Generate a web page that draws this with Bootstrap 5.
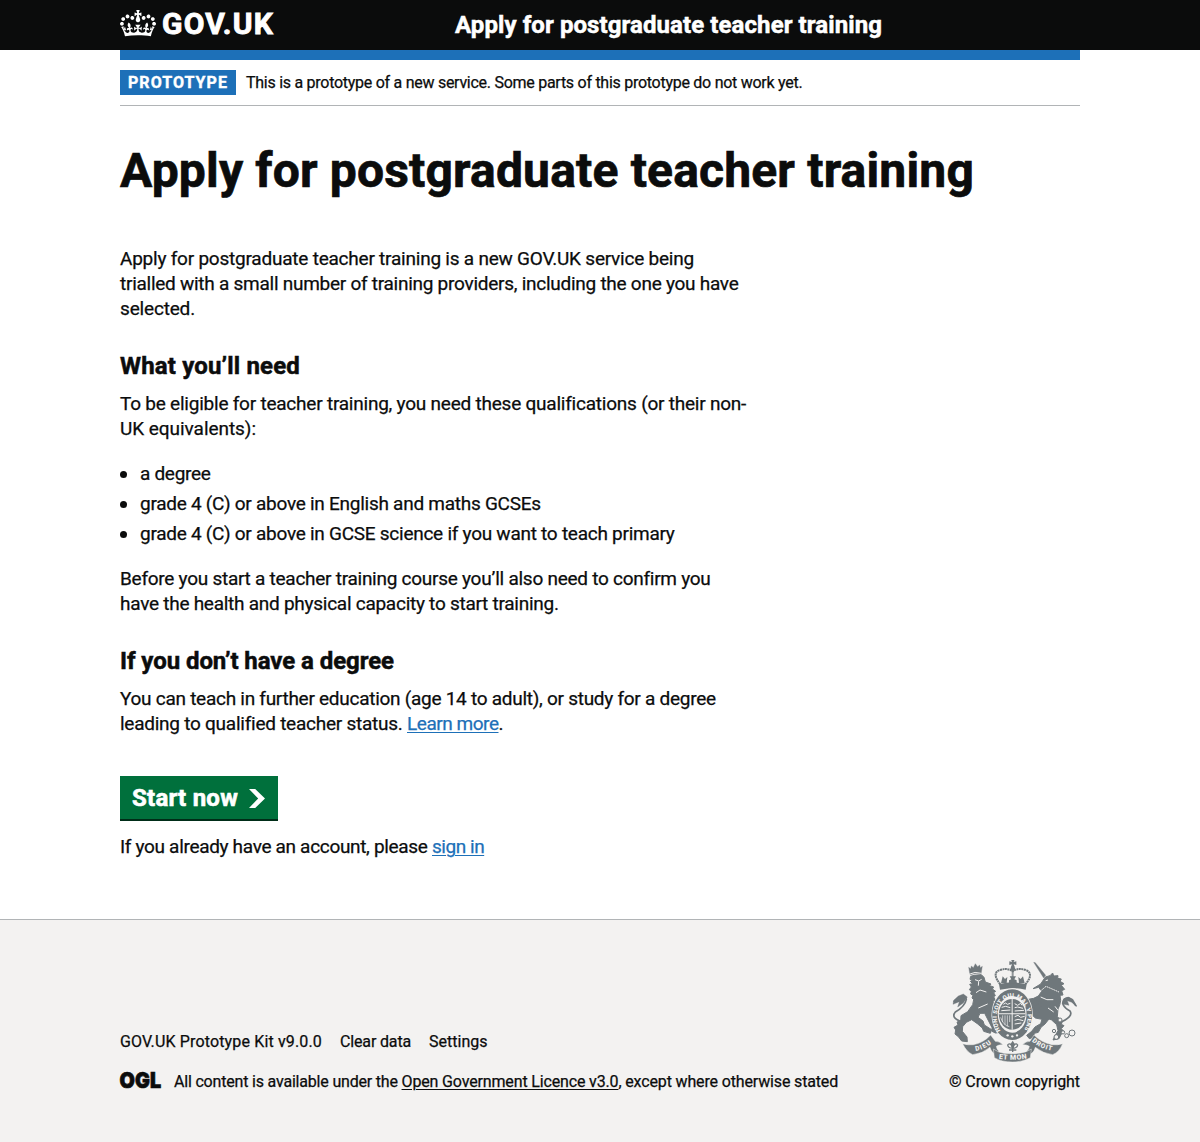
<!DOCTYPE html>
<html lang="en">
<head>
<meta charset="utf-8">
<meta name="viewport" content="width=device-width, initial-scale=1">
<title>Apply for postgraduate teacher training</title>
<link rel="stylesheet" href="https://cdn.jsdelivr.net/npm/bootstrap@5.3.0/dist/css/bootstrap.min.css">
<style>
body{font-family:Roboto,"Liberation Sans",sans-serif;font-size:19px;line-height:25px;color:#0b0c0c;background:#fff;-webkit-text-stroke:.25px}
.page-width{width:960px;margin:0 auto}
.top-bar{background:#0b0c0c;height:50px;color:#fff}
.top-bar a{color:#fff;text-decoration:none}
.crown{width:36px;height:26.5px;margin-right:6px;fill:#fff;flex:none}
.logo-link{width:335px;height:50px;padding-bottom:3px}
.logo-word{font-size:30px;font-weight:700;letter-spacing:1.206px;-webkit-text-stroke:.9px}
.service-name{font-size:24px;font-weight:700;letter-spacing:.087px;-webkit-text-stroke:.5px}
.blue-bar{height:10px;background:#1d70b8}
.phase{padding:10px 0;border-bottom:1px solid #b1b4b6;height:46px}
.phase-tag{background:#1d70b8;color:#fff;font-size:16px;font-weight:700;letter-spacing:1.05px;width:116px;height:25px;padding-left:8px;margin-right:10px;-webkit-text-stroke:.4px}
.small-copy{font-size:16px}
h1{font-size:48px;line-height:50px;font-weight:700;margin:40px 0 50px;letter-spacing:.174px;-webkit-text-stroke:.7px}
h2{font-size:24px;line-height:30px;font-weight:700;margin:0 0 10px;-webkit-text-stroke:.5px}
.copy{width:630px}
.copy p{margin:0 0 20px}
.copy p.gap-after{margin-bottom:30px}
.copy ul{list-style:none;padding-left:20px;margin:0 0 20px}
.copy li{margin-bottom:5px;position:relative}
.copy li::before{content:"";position:absolute;left:-20px;top:9.500px;width:7px;height:7px;border-radius:50%;background:#0b0c0c}
.copy a{color:#1d70b8;text-decoration:underline;text-underline-offset:2px;text-decoration-thickness:1px}
.t09{letter-spacing:.159px}.t05{letter-spacing:-.047px}.t07{letter-spacing:-.07px}.t17{letter-spacing:-.172px}
.t21{letter-spacing:-.225px}.t22{letter-spacing:-.223px}.t23{letter-spacing:-.25px}.t26{letter-spacing:-.262px}
.t27{letter-spacing:-.27px}.t30{letter-spacing:-.303px}.t32{letter-spacing:-.32px}.t46{letter-spacing:-.463px}
.f15{letter-spacing:.148px}.f14{letter-spacing:-.15px}.f18{letter-spacing:-.19px}.f09{letter-spacing:-.087px}
.copy a.btn-start{display:flex;align-items:center;width:158px;height:45px;padding:1px 13px 0 12px;background:#00703c;border-bottom:2px solid #002d18;border-radius:0;color:#fff;font-size:24px;font-weight:700;letter-spacing:.241px;text-decoration:none;-webkit-text-stroke:.6px;margin:40px 0 13px}
.site-footer{background:#f3f2f1;border-top:1px solid #b1b4b6;height:223px;margin-top:60px;font-size:16px;line-height:20px;padding-top:40px}
.site-footer a{color:#0b0c0c;text-decoration:none}
.site-footer .licence-link{text-decoration:underline;text-underline-offset:2px;text-decoration-thickness:1px}
.meta-links{gap:18px;margin-bottom:20px}
.crest{width:125px;height:102px;margin-bottom:10px}
.ogl-mark{margin:-1px 10px 0 -3px;overflow:visible}
svg text{-webkit-text-stroke:0}
</style>
</head>
<body>
<header class="top-bar">
  <div class="page-width d-flex align-items-center">
    <a href="#" class="logo-link d-flex align-items-center">
      <svg class="crown" viewBox="0 0 132 97" aria-hidden="true"><path fill-rule="evenodd" d="M25 30.2c3.5 1.5 7.7-.2 9.1-3.7 1.5-3.6-.2-7.8-3.9-9.2-3.6-1.4-7.6.3-9.1 3.9-1.4 3.5.3 7.5 3.9 9zM9 39.5c3.6 1.5 7.8-.2 9.2-3.7 1.5-3.6-.2-7.8-3.9-9.1-3.6-1.5-7.6.2-9.1 3.8-1.4 3.5.3 7.5 3.8 9zM4.4 57.2c3.5 1.5 7.7-.2 9.1-3.8 1.5-3.6-.2-7.7-3.9-9.1-3.5-1.5-7.6.3-9.1 3.8-1.4 3.5.3 7.6 3.9 9.1zm38.3-21.4c3.5 1.5 7.7-.2 9.1-3.8 1.5-3.6-.2-7.7-3.9-9.1-3.6-1.5-7.6.3-9.1 3.8-1.3 3.6.4 7.7 3.9 9.1zm64.4-5.6c-3.6 1.5-7.8-.2-9.1-3.7-1.5-3.6.2-7.8 3.8-9.2 3.6-1.4 7.7.3 9.2 3.9 1.3 3.5-.4 7.5-3.9 9zm15.9 9.3c-3.6 1.5-7.7-.2-9.1-3.7-1.5-3.6.2-7.8 3.7-9.1 3.6-1.5 7.7.2 9.2 3.8 1.5 3.5-.3 7.5-3.8 9zm4.7 17.7c-3.6 1.5-7.8-.2-9.2-3.8-1.5-3.6.2-7.7 3.9-9.1 3.6-1.5 7.7.3 9.2 3.8 1.3 3.5-.4 7.6-3.9 9.1zM89.3 35.8c-3.6 1.5-7.8-.2-9.2-3.8-1.4-3.6.2-7.7 3.9-9.1 3.6-1.5 7.7.3 9.2 3.8 1.4 3.6-.3 7.7-3.9 9.1zM69.7 17.7l8.9 4.7V9.3l-8.9 2.8c-.2-.3-.5-.6-.9-.9L72.4 0H59.6l3.5 11.2c-.3.3-.6.5-.9.9l-8.8-2.8v13.1l8.8-4.7c.3.3.6.7.9.9l-5 15.4v.1c-.2.8-.4 1.6-.4 2.4 0 4.1 3.1 7.5 7 8.1h.2c.3 0 .7.1 1 .1.4 0 .7 0 1-.1h.2c4-.6 7.1-4.1 7.1-8.1 0-.8-.1-1.7-.4-2.4V34l-5.1-15.4c.4-.2.7-.6 1-.9zM66 92.8c16.9 0 32.8 1.1 47.1 3.2 4-16.9 8.9-26.7 14-33.5l-9.6-3.4c1 4.9 1.1 7.2 0 10.2-1.5-1.4-3-4.3-4.2-8.7L108.6 76c2.8-2 5-3.2 7.5-3.3-4.4 9.4-10 11.9-13.6 11.2-4.3-.8-6.3-4.6-5.6-7.9 1-4.7 5.7-5.9 8-.5 4.3-8.7-3-11.4-7.6-8.8 7.1-7.2 7.9-13.5 2.1-21.1-8 6.1-8.1 12.3-4.5 20.8-4.7-5.4-12.1-2.5-9.5 6.2 3.4-5.2 7.9-2 7.2 3.1-.6 4.3-6.4 7.8-13.5 7.2-10.3-.9-10.9-8-11.2-13.8 2.5-.5 7.1 1.8 11 7.3L80.2 60c-4.1 4.4-8 5.3-12.3 5.4 1.4-4.4 8-11.6 8-11.6H55.5s6.4 7.2 7.9 11.6c-4.2-.1-8-1-12.3-5.4l1.4 16.4c3.9-5.5 8.5-7.7 10.9-7.3-.3 5.8-.9 12.8-11.1 13.8-7.2.6-12.9-2.9-13.5-7.2-.7-5 3.8-8.3 7.1-3.1 2.7-8.7-4.6-11.6-9.4-6.2 3.7-8.5 3.6-14.7-4.6-20.8-5.8 7.6-5 13.9 2.2 21.1-4.7-2.6-11.9.1-7.7 8.8 2.3-5.5 7.1-4.2 8.1.5.7 3.3-1.3 7.1-5.7 7.9-3.5.7-9-1.8-13.5-11.2 2.5.1 4.7 1.3 7.5 3.3l-4.7-15.4c-1.2 4.4-2.7 7.2-4.3 8.7-1.1-3-.9-5.3 0-10.2l-9.5 3.4c5 6.9 9.9 16.7 14 33.5 14.8-2.1 30.8-3.2 47.7-3.2z"/></svg>
      <span class="logo-word">GOV.UK</span>
    </a>
    <a href="#" class="service-name">Apply for postgraduate teacher training</a>
  </div>
</header>
<div class="page-width">
  <div class="blue-bar"></div>
  <div class="phase d-flex">
    <strong class="phase-tag">PROTOTYPE</strong>
    <span class="small-copy t27">This is a prototype of a new service. Some parts of this prototype do not work yet.</span>
  </div>
  <main>
    <h1>Apply for postgraduate teacher training</h1>
    <div class="copy text-nowrap">
      <p class="gap-after"><span class="t22">Apply for postgraduate teacher training is a new GOV.UK service being</span><br><span class="t26">trialled with a small number of training providers, including the one you have</span><br><span class="t17">selected.</span></p>
      <h2 class="t09">What you’ll need</h2>
      <p><span class="t21">To be eligible for teacher training, you need these qualifications (or their non-</span><br><span class="t05">UK equivalents):</span></p>
      <ul>
        <li class="t30">a degree</li>
        <li class="t26">grade 4 (C) or above in English and maths GCSEs</li>
        <li class="t26">grade 4 (C) or above in GCSE science if you want to teach primary</li>
      </ul>
      <p class="gap-after t26">Before you start a teacher training course you’ll also need to confirm you<br>have the health and physical capacity to start training.</p>
      <h2 class="t07">If you don’t have a degree</h2>
      <p><span class="t27">You can teach in further education (age 14 to adult), or study for a degree</span><br><span class="t23">leading to qualified teacher status. </span><a href="#" class="t46">Learn more</a>.</p>
      <a href="#" class="btn-start" role="button">Start now
        <svg class="ms-auto" width="16" height="19" viewBox="0 0 16 19" aria-hidden="true"><path fill="#fff" d="M0 0h6.2L16 9.5 6.2 19H0l9.2-9.5z"/></svg>
      </a>
      <p class="mb-0"><span class="t32">If you already have an account, please </span><a href="#" class="t46">sign in</a></p>
    </div>
  </main>
</div>
<footer class="site-footer">
  <div class="page-width d-flex justify-content-between align-items-end text-nowrap">
    <div>
      <div class="meta-links d-flex"><a href="#" class="f15">GOV.UK Prototype Kit v9.0.0</a><a href="#" class="f14">Clear data</a><a href="#">Settings</a></div>
      <div class="d-flex">
        <svg class="ogl-mark" width="47" height="20" viewBox="-3 0 47 20" role="img" aria-label="Open Government Licence"><text x="-.4" y="16.6" font-family="Inter" font-weight="900" font-size="22" textLength="41.500" lengthAdjust="spacingAndGlyphs" fill="#0b0c0c" stroke="#0b0c0c" stroke-width=".7">OGL</text></svg>
        <div><span class="f18">All content is available under the </span><a href="#" class="licence-link f14">Open Government Licence v3.0</a><span class="f14">, except where otherwise stated</span></div>
      </div>
    </div>
    <div class="d-flex flex-column align-items-center">
      <svg class="crest" viewBox="36 31 375 306" aria-hidden="true">
        <defs>
          <path id="garter" d="M182 243A46 60 0 1 1 251 243"/>
          <path id="scrollL" d="M107 304Q134 300 160 277"/>
          <path id="scrollM" d="M176 327Q219 334 263 326"/>
          <path id="scrollR" d="M275 275Q302 298 340 304"/>
        </defs>
        <g fill="#6f777b">
          <!-- centre crown -->
          <path d="M213 29h11l-3 8 8-2v11l-8-2 3 8h-11l3-8-8 2v-11l8 2z"/>
          <circle cx="218.500" cy="57" r="7"/>
          <path d="M177 104q41-12 83 0l-3 16q-38-9-77 0z"/>
          <path fill="none" stroke="#6f777b" stroke-width="6" stroke-dasharray="6 1.500" d="M181 104q-26-32-4-42 26-9 41 3 16-12 42-3 22 12-4 42"/>
          <path fill="none" stroke="#6f777b" stroke-width="6" stroke-dasharray="4 2" d="M218 62v40"/>
          <path d="M188 80l7 8 7-6-2 18-17 1zM249 80l-7 8-7-6 2 18 17 1zM209 80h19l-5 9 7 3v10h-23v-10l7-3z"/>
        </g>
        <g fill="#6f777b" stroke="#6f777b" stroke-width="3" stroke-linejoin="round">
          <!-- lion -->
          <path stroke-width="1" d="M86 53l6 4 2-8 6 5 6-12 7 9 6-5 2 8 6-4-4 24q-16-6-33 2z"/>
          <path d="M92 80l10-3 22-2 8 8 4 14 17 6-4 5 12 4-4 6 10 7-6 4 5 9-5 3 5 10-7 4 3 12q-1 26 11 61l7 11 5 9-19 2-10-5 0-11-22-43-14 0-6 12 15 11 4 12 22 14-4 11-20-6-4-10-15-13-17-12-16 8-11 13-1 14 14 17 1 14-17-2-10-13-10-8 2-12-5-8 12-7-3-9 11-3 1-16 20-12 15-21 3-15-5-5 3-8-7-4 2-8-6-5 6-8-5-8 9-2-7-7 8-4-9-2z"/>
          <path fill="none" stroke-width="5" d="M66 216Q31 205 46 187 75 170 79 149 76 133 59 145 48 160 41 154"/>
          <path stroke-width="1" d="M41 152l14-13 15-6 12 9-12 18-17 12 5-16-19 8z"/>
          <!-- unicorn -->
          <path stroke-width="1" d="M281 38l5 1 31 38-6 8z"/>
          <path d="M302 103l14-21 14-4 8-8 3 9 13-1-1 8 11 2-4 7 12 7-8 5 10 12-9 4 4 13-9 1 2 15q-1 14-8 26l-2 23 15 14-3 9 8 4-8 9 9 10-9 6-7 14-18 4 6-12 9-16-4-18-15-14-8-3-12 15-12 10-8 15-12 3-3 12-12 4-8-10 15-12 10-13 17-10 4-13-20-4-18-17-18-5-12-12 10-16 17-6 16-3 14-7 10-14-9-12-17 4z"/>
          <path fill="none" stroke-width="5" d="M356 220Q402 201 390 184 360 168 372 149 388 137 400 157l8 12"/>
          <path stroke-width="1" d="M366 163l6-16 13-5 14 7 12 22-16-13-13-5 5 14z"/>
          <path stroke-width="1" d="M282 170l13-7-7-11 14 5 3 13-11 9 4 9-11-3z"/>
        </g>
        <g fill="none" stroke="#f3f2f1">
          <path stroke-width="3" d="M87 74q18-10 37-3M105 90l11 4 9-5M116 95l-1 13M108 129l12-8 19 6M115 175l28-12"/>
          <path stroke-width="3" stroke-dasharray="5 2" d="M299 126l19-16 39 17"/>
          <path stroke-width="3" d="M302 142q18 12 38 8M317 93l7-2M324 175l17 12M345 170l9 12"/>
        </g>
        <g fill="#f3f2f1" stroke="#6f777b" stroke-width="3">
          <circle cx="342" cy="244" r="5"/><circle cx="349" cy="262" r="7"/><circle cx="369" cy="248" r="5"/><circle cx="380" cy="258" r="6"/><circle cx="396" cy="250" r="9"/><circle cx="360" cy="211" r="6"/>
        </g>
        <!-- garter and shield -->
        <ellipse cx="216.500" cy="195" rx="62" ry="79" fill="#f3f2f1"/>
        <ellipse cx="216.500" cy="195" rx="60" ry="76" fill="#6f777b"/>
        <text font-family="Roboto" font-weight="900" font-size="18" fill="#f3f2f1"><textPath href="#garter" textLength="258">HONI SOIT QUI MAL Y PENSE</textPath></text>
        <ellipse cx="216.500" cy="194" rx="43" ry="55" fill="#f3f2f1"/>
        <ellipse cx="216.500" cy="194" rx="40" ry="46" fill="#6f777b"/>
        <path fill="#f3f2f1" d="M215 148h3v92h-3zM177 191h79v3h-79z"/>
        <g fill="none" stroke="#f3f2f1" stroke-width="3">
          <path d="M190 164l7-4 5 4 9-3M185 173l12-3 14 4M184 183l27-2M224 162l9 5 9-6 4 6M224 174l9-2 16 4M224 184l28-2M224 201l10-4 8 6 12-3M224 212l10-3 16 4M224 223l20-3"/>
          <path stroke-width="2" d="M188 197v20M195 197v28M202 197v33M209 197v20M182 203q7 24 26 28"/>
        </g>
        <circle cx="203" cy="257" r="3.500" fill="#f3f2f1"/><circle cx="217" cy="260" r="3.500" fill="#f3f2f1"/><circle cx="231" cy="257" r="3.500" fill="#f3f2f1"/>
        <!-- motto scroll -->
        <g fill="#6f777b" stroke="#f3f2f1" stroke-width="1.500">
          <path d="M68 282q16 5 32 3 30-5 52-29l14 19q13-1 22 11-12-2-19 4 1 9 7 14l-3 13q-18-5-23-24-24 20-52 22-19-9-30-33z"/>
          <path d="M368 282q-16 5-32 3-32-6-54-29l-12 19q-13-1-22 11 12-2 20 4-1 9-7 14l3 13q17-5 22-24 24 19 52 22 20-8 30-33z"/>
          <path d="M160 298q16 11 32 13 27 3 51-1 18-3 31-12l-3 26q-23 13-54 13-32 0-54-13z"/>
        </g>
        <g font-family="Roboto" font-weight="900" fill="#f3f2f1">
          <text font-size="20"><textPath href="#scrollL" textLength="53">DIEU</textPath></text>
          <text font-size="21"><textPath href="#scrollM" textLength="85">ET MON</textPath></text>
          <text font-size="20"><textPath href="#scrollR" textLength="67">DROIT</textPath></text>
        </g>
        <!-- fleur-de-lis -->
        <g fill="none" stroke="#6f777b" stroke-width="4">
          <path d="M218 307v-16M218 296q-14-1-15-10 4-7 11 0l4 10M218 296q14-1 15-10-4-7-11 0l-4 10M207 301h22"/>
        </g>
        <path fill="#6f777b" d="M218 273l7 11-7 13-7-13z"/>
      </svg>
      <a href="#" class="f09">© Crown copyright</a>
    </div>
  </div>
</footer>
<script src="https://cdn.jsdelivr.net/npm/bootstrap@5.3.0/dist/js/bootstrap.bundle.min.js"></script>
</body>
</html>
